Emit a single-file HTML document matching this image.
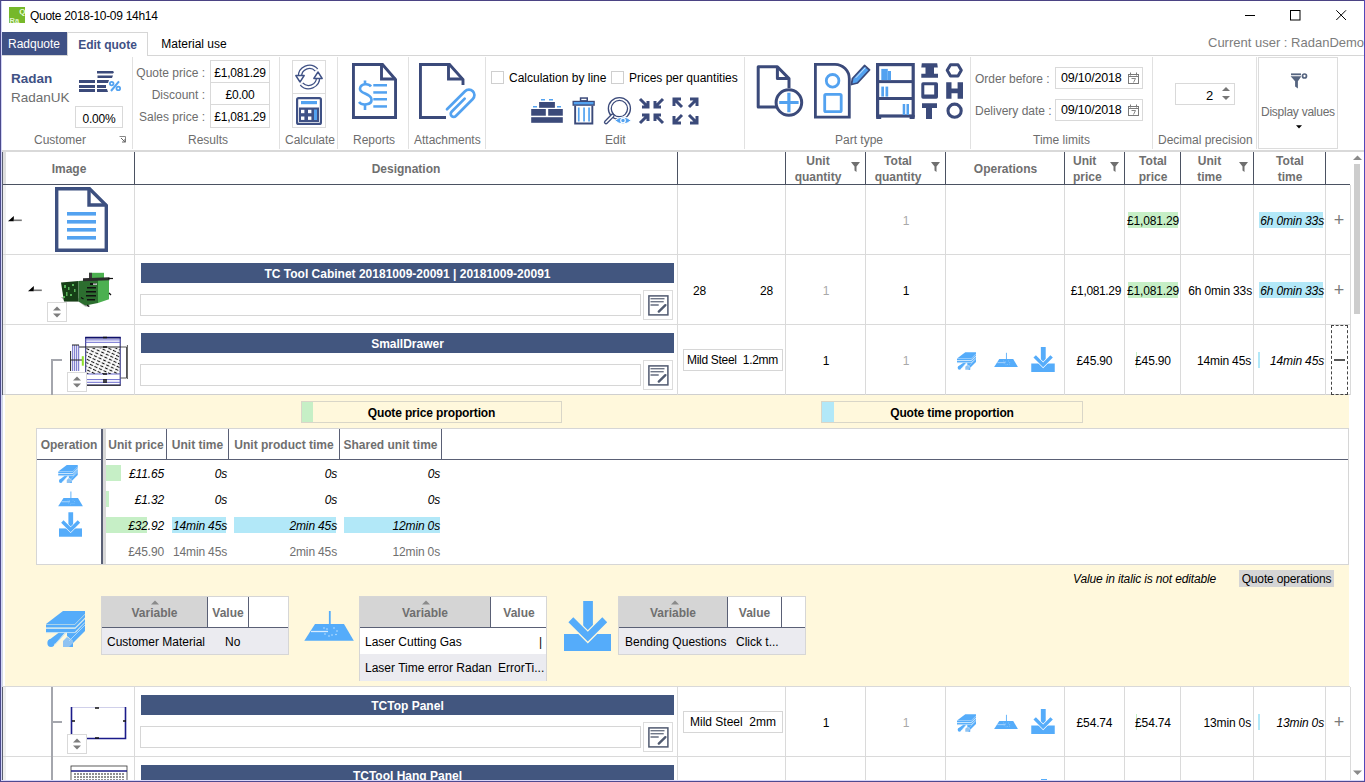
<!DOCTYPE html>
<html><head><meta charset="utf-8">
<style>
*{box-sizing:border-box;margin:0;padding:0}
html,body{width:1365px;height:782px;overflow:hidden;background:#fff}
body{position:relative;font-family:"Liberation Sans",sans-serif;font-size:12px;color:#000}
.a{position:absolute;white-space:nowrap}
.g{color:#6d6d6d}
.sep{position:absolute;width:1px;background:#e1e1e1;top:57px;height:92px}
.vb{position:absolute;border:1px solid #d9d9d9;background:#fff;text-align:center;line-height:24px;letter-spacing:-0.2px}
.lbl{position:absolute;color:#6d6d6d;font-size:12px;white-space:nowrap}
svg{position:absolute;overflow:visible}
.hl{position:absolute;top:152px;width:1px;height:33px;background:#4b5262}
.hd{position:absolute;font-weight:bold;color:#6f6f6f;text-align:center;white-space:nowrap}
.rl{position:absolute;left:3px;width:1347px;height:1px;background:#dadada}
.vl{position:absolute;width:1px;background:#dadada}
.t{position:absolute;white-space:nowrap;line-height:14px;letter-spacing:-0.15px}
.g2{color:#a8a8a8}
.it{font-style:italic;text-align:right}
.tot{color:#6f6f6f;text-align:right}
.vt{position:absolute;border:1px solid #d6d6d6;background:#fff}
.vh{position:absolute;top:0;height:30px;font-weight:bold;color:#6f6f6f;text-align:center;line-height:33px}
.vhl{position:absolute;left:0;right:0;top:30px;height:1px;background:#5a6075}
.vr{position:absolute;left:0;right:0;height:26px}
.vr span{position:absolute;top:7px;line-height:14px;white-space:nowrap}

.pm{text-align:center;font-size:18px;color:#7a7a7a;margin-top:2px;margin-left:1px}
.bar{position:absolute;left:141px;width:533px;height:20px;background:#42567f;color:#fff;font-weight:bold;text-align:center;line-height:22px}
.inp{position:absolute;left:140px;width:501px;height:22px;border:1px solid #d6d6d6;background:#fff}
.ebtn{position:absolute;left:643px;width:30px;height:30px;border:1px solid #dcdcdc;background:#fff}
.spin{position:absolute;width:20px;height:20px;border:1px solid #d9d9d9;background:#fff}
.tb{position:absolute;border:1px solid #d6d6d6;background:#fff;line-height:20px;white-space:nowrap}

</style></head><body>
<svg width="0" height="0" style="position:absolute;left:0;top:0">
<defs>
<symbol id="imat" viewBox="0 0 39 36">
<path d="M0 13L17 0H39V3L29 13Z" fill="#55acfa"/>
<path d="M0 13.6H29L39 3.6V6.6L29 16.6H0Z" fill="#55acfa"/>
<path d="M0 18H29L39 8V11L29 21H0Z" fill="#55acfa"/>
<path d="M3 29L13 21.5H19L9 33Z" fill="#55acfa"/>
<ellipse cx="5" cy="32" rx="3.6" ry="4" fill="#55acfa"/>
<path d="M21 26L17 30V36H27V30Z" fill="#8fc3f2"/>
<path d="M23 36L39 20V11L30 21.5H21V25L27 30V36Z" fill="#55acfa"/>
<path d="M0 17.3H29L39 7.3M0 21.6H29L39 11.6M9 33.5L19.5 22M23 30L39 14" stroke="#b5dcfb" stroke-width="0.9" fill="none"/>
</symbol>
<symbol id="ilas" viewBox="0 0 50 30">
<path d="M0.3 29.7L11 13H40L49.8 29.7Z" fill="#55acfa"/>
<rect x="24.9" y="0" width="1.8" height="21" fill="#55acfa"/>
<path d="M7 20.5H24" stroke="#d6ecff" stroke-width="1.3"/>
<g fill="#d6ecff"><circle cx="20" cy="17" r="0.7"/><circle cx="30" cy="17" r="0.7"/><circle cx="33" cy="20" r="0.7"/><circle cx="21" cy="23" r="0.7"/><circle cx="28" cy="24" r="0.7"/><circle cx="32" cy="23.5" r="0.7"/><circle cx="25" cy="25" r="0.7"/><circle cx="23" cy="18" r="0.7"/></g>
</symbol>
<symbol id="iben" viewBox="0 0 47 50">
<path d="M0 33H47V50H0Z" fill="#55acfa"/>
<rect x="19.2" y="0" width="9.7" height="30" fill="#55acfa" stroke="#fffaf0" stroke-width="0"/>
<path d="M9.3 16.3L23.8 30.8L38.3 16.3L43.2 21.2L23.8 40.6L4.4 21.2Z" fill="#55acfa" stroke="#fff8dc" stroke-width="2.6" paint-order="stroke"/>
</symbol>
<symbol id="ibenw" viewBox="0 0 47 50">
<path d="M0 33H47V50H0Z" fill="#55acfa"/>
<rect x="19.2" y="0" width="9.7" height="30" fill="#55acfa"/>
<path d="M9.3 16.3L23.8 30.8L38.3 16.3L43.2 21.2L23.8 40.6L4.4 21.2Z" fill="#55acfa" stroke="#fff" stroke-width="2.6" paint-order="stroke"/>
</symbol>
<symbol id="iedit" viewBox="0 0 21 21">
<rect x="0.9" y="0.9" width="19" height="19" fill="#fff" stroke="#505a70" stroke-width="1.5"/>
<g fill="#6f7788"><rect x="2.5" y="3" width="14" height="1.4"/><rect x="2.5" y="6" width="13.2" height="1.4"/><rect x="2.5" y="9.2" width="8.2" height="1.6"/></g>
<path d="M10.8 16.6L17.4 10.2" stroke="#505a70" stroke-width="2.4" stroke-linecap="round"/>
</symbol>
<symbol id="ispin" viewBox="0 0 20 20">
<path d="M6 8.5L10 4.5L14 8.5Z M6 11.5L10 15.5L14 11.5Z" fill="#7c7c7c"/>
</symbol>
</defs></svg>
<!-- window border -->
<div class="a" style="left:0;top:0;width:1365px;height:1px;background:#4b4384;z-index:50"></div>
<div class="a" style="left:0;top:0;width:1px;height:782px;background:#4b4a8c;z-index:50"></div>
<div class="a" style="left:1px;top:1px;width:1px;height:780px;background:#d2d4f6;z-index:50"></div>
<div class="a" style="left:1364px;top:0;width:1px;height:782px;background:#5346b8;z-index:50"></div>
<div class="a" style="left:0;top:781px;width:1365px;height:1px;background:#4f4a90;z-index:50"></div>
<div class="a" style="left:1px;top:780px;width:1363px;height:1px;background:#d8d6f8;z-index:50"></div>

<!-- title bar -->
<svg style="left:9px;top:7px" width="16" height="16" viewBox="0 0 16 16">
<rect width="16" height="16" fill="#76b82a"/>
<text x="10.2" y="7.2" font-size="8" font-weight="bold" fill="#e8ffd8" font-family="Liberation Sans">Q</text>
<text x="0.5" y="15.5" font-size="7.5" font-weight="bold" fill="#e0f5d0" font-family="Liberation Sans">Ra</text>
</svg>
<div class="a" style="left:30px;top:9px;font-size:12px;letter-spacing:-0.3px">Quote 2018-10-09 14h14</div>
<svg style="left:1245px;top:15px" width="11" height="2"><rect width="10" height="1" fill="#000"/></svg>
<svg style="left:1290px;top:10px" width="11" height="11"><rect x="0.5" y="0.5" width="9.5" height="9.5" fill="none" stroke="#000"/></svg>
<svg style="left:1336px;top:10px" width="11" height="11"><path d="M0.3 0.3L10 10M10 0.3L0.3 10" stroke="#000" stroke-width="1"/></svg>

<!-- tabs -->
<div class="a" style="left:1px;top:32px;width:66px;height:23px;background:#3f5185;color:#fff;text-align:center;line-height:25px">Radquote</div>
<div class="a" style="left:67px;top:32px;width:81px;height:24px;background:#fff;border:1px solid #d6d6d6;border-bottom:none;color:#3f5185;font-weight:bold;text-align:center;line-height:25px;z-index:2">Edit quote</div>
<div class="a" style="left:148px;top:32px;width:92px;height:23px;text-align:center;line-height:25px">Material use</div>
<div class="a g" style="left:1208px;top:35px;font-size:13px;color:#7c7c7c">Current user : RadanDemo</div>
<div class="a" style="left:1px;top:55px;width:1363px;height:1px;background:#d6d6d6"></div>

<!-- ribbon bottom -->
<div class="a" style="left:1px;top:150px;width:1363px;height:2px;background:#d9d9d9"></div>

<!-- ribbon separators -->
<div class="sep" style="left:132px"></div>
<div class="sep" style="left:279px"></div>
<div class="sep" style="left:337px"></div>
<div class="sep" style="left:408px"></div>
<div class="sep" style="left:485px"></div>
<div class="sep" style="left:744px"></div>
<div class="sep" style="left:970px"></div>
<div class="sep" style="left:1152px"></div>
<div class="sep" style="left:1256px"></div>

<!-- Customer group -->
<div class="a" style="left:11px;top:71px;font-size:13.5px;font-weight:bold;color:#3f5185">Radan</div>
<div class="a g" style="left:11px;top:90px;font-size:13.5px">RadanUK</div>
<svg style="left:79px;top:71px" width="44" height="22" viewBox="0 0 44 22">
<g fill="#3b4a7a">
<rect x="0" y="9" width="16" height="3"/><rect x="0" y="14" width="16" height="3"/><rect x="0" y="18" width="16" height="3"/>
<path d="M18 0h16l1 1.3-1 1.3h-16z"/><path d="M18.5 4.5h15.5l-1 2.6h-14.5z"/><path d="M18 9h12l-1 3h-11z"/><path d="M18 14h9v3h-9z"/><path d="M18 18h10l1 3h-11z"/>
</g>
<g fill="none" stroke="#53a2f0"><circle cx="32.7" cy="12.6" r="1.8" stroke-width="1.8"/><circle cx="39.3" cy="17.4" r="1.8" stroke-width="1.8"/><path d="M40 10.3L32 20" stroke-width="2"/></g>
</svg>
<div class="vb" style="left:75px;top:106px;width:48px;height:22px">0.00%</div>
<div class="lbl" style="left:34px;top:133px">Customer</div>
<svg style="left:119px;top:136px" width="8" height="8"><path d="M0.5 0.5h6v6" fill="none" stroke="#888" stroke-width="1"/><path d="M2 2l4 4M3 6h3v-3" fill="none" stroke="#666"/></svg>

<!-- Results group -->
<div class="lbl" style="left:136px;top:66px;width:69px;text-align:right">Quote price :</div>
<div class="lbl" style="left:136px;top:88px;width:69px;text-align:right">Discount :</div>
<div class="lbl" style="left:136px;top:110px;width:69px;text-align:right">Sales price :</div>
<div class="vb" style="left:210px;top:60px;width:60px;height:23px">£1,081.29</div>
<div class="vb" style="left:210px;top:82px;width:60px;height:23px">£0.00</div>
<div class="vb" style="left:210px;top:104px;width:60px;height:24px">£1,081.29</div>
<div class="lbl" style="left:188px;top:133px">Results</div>

<!-- Calculate group -->
<div class="a" style="left:292px;top:60px;width:34px;height:34px;border:1px solid #dcdcdc"></div>
<div class="a" style="left:292px;top:93px;width:34px;height:35px;border:1px solid #dcdcdc"></div>
<svg style="left:295px;top:65px" width="28" height="24" viewBox="0 0 28 24">
<g fill="none" stroke-linecap="butt">
<path d="M5 12A9.5 9.5 0 0 1 21.5 5" stroke="#3f5185" stroke-width="4.6"/>
<path d="M5 12A9.5 9.5 0 0 1 21.5 5" stroke="#fff" stroke-width="2"/>
<path d="M23 12A9.5 9.5 0 0 1 6.5 19" stroke="#3f5185" stroke-width="4.6"/>
<path d="M23 12A9.5 9.5 0 0 1 6.5 19" stroke="#fff" stroke-width="2"/>
</g>
<path d="M0.8 10.5L9.2 10.5L5 17Z" fill="#fff" stroke="#3f5185" stroke-width="1.4" stroke-linejoin="round"/>
<path d="M18.8 13.5L27.2 13.5L23 7Z" fill="#fff" stroke="#3f5185" stroke-width="1.4" stroke-linejoin="round"/>
</svg>
<svg style="left:296px;top:97px" width="26" height="28" viewBox="0 0 26 28">
<rect x="1.1" y="1.1" width="23.8" height="25.8" rx="1.5" fill="#fff" stroke="#3f5185" stroke-width="2.2"/>
<rect x="5" y="4" width="16" height="3.2" fill="#53a2f0"/>
<rect x="3" y="10.5" width="20" height="14.5" fill="#3f5185"/>
<g fill="#fff"><rect x="5" y="12.8" width="3.4" height="3.4"/><rect x="12" y="12.8" width="3.4" height="3.4"/><rect x="5" y="19.5" width="3.4" height="3.4"/><rect x="12" y="19.5" width="3.4" height="3.4"/></g>
<rect x="18" y="12.5" width="3" height="10.5" fill="#53a2f0"/>
</svg>
<div class="lbl" style="left:285px;top:133px">Calculate</div>

<!-- Reports -->
<svg style="left:352px;top:63px" width="46" height="56" viewBox="0 0 46 56">
<path d="M1.45 1.45H30.5L43.55 16.5V54.55H1.45Z" fill="none" stroke="#3b4a7a" stroke-width="2.9"/>
<path d="M29.5 1.45V16H43.55" fill="none" stroke="#3b4a7a" stroke-width="2.9"/>
<path d="M19 23.5C17 20.5 9 20 8 25.5C7 31 19 30 19.5 36.5C20 42 10 43 7 39" fill="none" stroke="#53a2f0" stroke-width="2.6"/>
<path d="M13 17.5V22M13 42V47" stroke="#53a2f0" stroke-width="2.6"/>
<g fill="#53a2f0"><rect x="21.3" y="21" width="13.7" height="2.5"/><rect x="21.3" y="28.2" width="13.7" height="2.5"/><rect x="21.3" y="35" width="13.7" height="2.5"/><rect x="21.3" y="42.2" width="13.7" height="2.5"/></g>
</svg>
<div class="lbl" style="left:353px;top:133px">Reports</div>

<!-- Attachments -->
<svg style="left:419px;top:63px" width="60" height="60" viewBox="0 0 60 60">
<path d="M27 54.55H1.45V1.45H30.5L44 16.5V22" fill="none" stroke="#3b4a7a" stroke-width="2.9"/>
<path d="M29.5 1.45V16H44" fill="none" stroke="#3b4a7a" stroke-width="2.9"/>
<g transform="translate(42.5 39.5) rotate(45)">
<path d="M-5.5 15V-10.5A5.5 5.5 0 0 1 5.5 -10.5V13.5A3 3 0 0 1 -0.5 13.5V-5" fill="none" stroke="#53a2f0" stroke-width="2.7" stroke-linecap="round"/>
</g>
</svg>
<div class="lbl" style="left:414px;top:133px">Attachments</div>

<!-- Edit group -->
<div class="a" style="left:491px;top:71px;width:13px;height:13px;border:1px solid #cfcfcf;background:#fff"></div>
<div class="a" style="left:509px;top:71px">Calculation by line</div>
<div class="a" style="left:611px;top:71px;width:13px;height:13px;border:1px solid #cfcfcf;background:#fff"></div>
<div class="a" style="left:629px;top:71px">Prices per quantities</div>
<svg style="left:531px;top:98px" width="33" height="26" viewBox="0 0 33 26">
<g fill="#53a2f0"><rect x="10" y="1" width="4" height="1.5"/><rect x="18" y="1" width="4" height="1.5"/><rect x="2" y="8" width="4" height="1.5"/><rect x="26" y="8" width="4" height="1.5"/></g>
<g fill="#3b4a7a"><rect x="8.1" y="4" width="15.8" height="5.8"/><rect x="0.2" y="11" width="14.6" height="6.7"/><rect x="17.2" y="11" width="14.6" height="6.7"/><rect x="0.2" y="19.2" width="31.6" height="5.6"/></g>
</svg>
<svg style="left:572px;top:97px" width="24" height="28" viewBox="0 0 24 28">
<rect x="8.55" y="1.05" width="6.7" height="2.8" fill="none" stroke="#3b4a7a" stroke-width="1.5"/>
<rect x="0.5" y="3.8" width="22.3" height="5" fill="#3b4a7a"/>
<rect x="1.8" y="5" width="19.7" height="2.4" fill="#53a2f0"/>
<path d="M3.15 8.8V26.55H20.35V8.8" fill="none" stroke="#3b4a7a" stroke-width="1.9"/>
<g fill="#53a2f0"><rect x="5.9" y="10.5" width="1.7" height="14"/><rect x="11.2" y="10.5" width="1.7" height="14"/><rect x="16.2" y="10.5" width="1.7" height="14"/></g>
</svg>
<svg style="left:603px;top:96px" width="29" height="30" viewBox="0 0 29 30">
<circle cx="16.4" cy="12.6" r="9.6" fill="none" stroke="#3b4a7a" stroke-width="4.2"/>
<circle cx="16.4" cy="12.6" r="9.6" fill="none" stroke="#fff" stroke-width="1.6"/>
<path d="M9.6 19.6L3 26.2" stroke="#3b4a7a" stroke-width="4.2" stroke-linecap="round"/>
<path d="M9.6 19.6L3 26.2" stroke="#fff" stroke-width="1.6" stroke-linecap="round"/>
<path d="M11.8 24.5Q20 17.5 28.2 24.5Q20 31.5 11.8 24.5Z" fill="#53a2f0" stroke="#fff" stroke-width="1"/>
<circle cx="20" cy="24.5" r="2.3" fill="none" stroke="#fff" stroke-width="1.1"/>
</svg>
<svg style="left:639px;top:98px" width="25" height="26" viewBox="0 0 25 26">
<g fill="none" stroke="#3b4a7a" stroke-width="3">
<path d="M1 1L9 9M3 9h6V3"/><path d="M24 1L16 9M22 9h-6V3"/>
<path d="M1 25L9 17M3 17h6v6"/><path d="M24 25L16 17M22 17h-6v6"/>
</g></svg>
<svg style="left:673px;top:98px" width="25" height="26" viewBox="0 0 25 26">
<g fill="none" stroke="#3b4a7a" stroke-width="3">
<path d="M9 9L2 2M1 8V1h7"/><path d="M16 9L23 2M24 8V1h-7"/>
<path d="M9 17L2 24M1 18v7h7"/><path d="M16 17L23 24M24 18v7h-7"/>
</g></svg>
<div class="lbl" style="left:605px;top:133px">Edit</div>

<!-- Part type -->
<svg style="left:756px;top:64px" width="50" height="56" viewBox="0 0 50 56">
<path d="M21 42.9H2.2V2.7H21.4L33 14.6V24" fill="none" stroke="#3b4a7a" stroke-width="3" stroke-linejoin="round"/>
<path d="M21.4 2.7V14.6H33" fill="none" stroke="#3b4a7a" stroke-width="3" stroke-linejoin="round"/>
<circle cx="32.9" cy="38.5" r="12.8" fill="#fff" stroke="#3b4a7a" stroke-width="3"/>
<path d="M32.9 28.8V48.2M23.2 38.5H42.6" stroke="#53a2f0" stroke-width="3.2"/>
</svg>
<svg style="left:814px;top:63px" width="57" height="57" viewBox="0 0 57 57">
<path d="M1.4 54.2V1.4H21A14.3 14.3 0 0 1 35.3 15.7V54.2Z" fill="none" stroke="#3b4a7a" stroke-width="2.8"/>
<circle cx="18.6" cy="17.8" r="6.3" fill="none" stroke="#53a2f0" stroke-width="2.8"/>
<rect x="10.7" y="31.4" width="16.5" height="17.2" rx="1.2" fill="none" stroke="#53a2f0" stroke-width="2.8"/>
<path d="M38.5 15.5L50.5 2.5L55.5 7L43.5 20L37.5 21.5Z" fill="#53a2f0" stroke="#3b4a7a" stroke-width="1.8" stroke-linejoin="round"/>
<path d="M41.8 14.8L51.5 4.6" stroke="#d8ecfc" stroke-width="1"/>
</svg>
<svg style="left:876px;top:63px" width="39" height="57" viewBox="0 0 39 57">
<rect x="1.6" y="1.6" width="35.6" height="51.4" fill="none" stroke="#3b4a7a" stroke-width="3.2"/>
<rect x="1" y="17.1" width="37" height="3" fill="#3b4a7a"/><rect x="1" y="34" width="37" height="3" fill="#3b4a7a"/>
<rect x="0.2" y="52" width="5" height="4" fill="#3b4a7a"/><rect x="33.6" y="52" width="5" height="4" fill="#3b4a7a"/>
<g fill="#53a2f0"><rect x="5.3" y="5.9" width="6.5" height="11.2"/><rect x="12" y="8" width="3" height="9.1"/><rect x="5.3" y="23.6" width="2.7" height="10"/><rect x="9.5" y="23.6" width="2.7" height="10"/><rect x="26.7" y="41" width="2.5" height="11"/><rect x="30.5" y="41" width="2.5" height="11"/></g>
</svg>
<svg style="left:921px;top:63px" width="44" height="57" viewBox="0 0 44 57">
<g fill="#3b4a7a">
<path d="M0.8 0.2H16.2L16.8 4.5H13V10.8H17V14.8H0.3V10.8H4.5V4.5H0.3Z"/>
<path d="M2 19.2H15.3A1.7 1.7 0 0 1 17 20.9V34A1.7 1.7 0 0 1 15.3 35.7H2A1.7 1.7 0 0 1 0.3 34V20.9A1.7 1.7 0 0 1 2 19.2ZM3.3 22.2V31.6H13.2V22.2Z" fill-rule="evenodd"/>
<path d="M1 40.2H16V45H11V56H5V45H1Z"/>
<path d="M25.2 19.2H30.5V25.6H36.6V19.2H42V35.7H36.6V30.2H30.5V35.7H25.2Z"/>
</g>
<path d="M26.2 7.3L29.5 1.7H37L40.3 7.3L37 13.1H29.5Z" fill="none" stroke="#3b4a7a" stroke-width="3" stroke-linejoin="round"/>
<circle cx="33.6" cy="47.7" r="6.6" fill="none" stroke="#3b4a7a" stroke-width="3.1"/>
</svg>
<div class="lbl" style="left:835px;top:133px">Part type</div>

<!-- Time limits -->
<div class="lbl" style="left:975px;top:72px">Order before :</div>
<div class="lbl" style="left:975px;top:104px">Delivery date :</div>
<div class="vb" style="left:1055px;top:67px;width:88px;height:22px;text-align:left;padding-left:5px;font-size:12.5px;line-height:21px">09/10/2018</div>
<div class="vb" style="left:1055px;top:99px;width:88px;height:22px;text-align:left;padding-left:5px;font-size:12.5px;line-height:21px">09/10/2018</div>
<svg style="left:1128px;top:72px" width="11" height="12"><rect x="0.5" y="2.5" width="10" height="9" fill="none" stroke="#7a7a7a"/><path d="M2.5 0.5v3M8.5 0.5v3M0.5 4.5h10" fill="none" stroke="#7a7a7a"/><path d="M3.5 6.5h4l-2 4" fill="none" stroke="#7a7a7a" stroke-width="0.9"/></svg>
<svg style="left:1128px;top:104px" width="11" height="12"><rect x="0.5" y="2.5" width="10" height="9" fill="none" stroke="#7a7a7a"/><path d="M2.5 0.5v3M8.5 0.5v3M0.5 4.5h10" fill="none" stroke="#7a7a7a"/><path d="M3.5 6.5h4l-2 4" fill="none" stroke="#7a7a7a" stroke-width="0.9"/></svg>
<div class="lbl" style="left:1033px;top:133px">Time limits</div>

<!-- Decimal precision -->
<div class="vb" style="left:1175px;top:83px;width:60px;height:22px"></div>
<div class="a" style="left:1206px;top:88px;font-size:13px">2</div>
<svg style="left:1222px;top:86px" width="8" height="15"><path d="M0 5L4 1L8 5Z M0 10L4 14L8 10Z" fill="#777"/></svg>
<div class="lbl" style="left:1158px;top:133px">Decimal precision</div>

<!-- Display values -->
<div class="a" style="left:1258px;top:57px;width:80px;height:92px;border:1px solid #dcdcdc"></div>
<svg style="left:1290px;top:72px" width="18" height="18" viewBox="0 0 18 18">
<path d="M1 1.4H11V3.2H1Z" fill="#55647f"/>
<path d="M0.6 4.3H11.4L7.9 9.2V16.5L5.1 14.6V9.2Z" fill="#55647f"/>
<circle cx="14.5" cy="4" r="2" fill="none" stroke="#55647f" stroke-width="1.7"/>
</svg>
<div class="lbl" style="left:1261px;top:105px;letter-spacing:-0.25px">Display values</div>
<svg style="left:1296px;top:125px" width="7" height="4"><path d="M0 0.2h6L3 3.6z" fill="#000"/></svg>


<!-- ================= GRID ================= -->
<div class="a" style="left:2px;top:152px;width:1px;height:243px;background:#5b6070"></div>
<div class="a" style="left:2px;top:395px;width:1px;height:292px;background:#d0d8e0"></div>
<div class="a" style="left:2px;top:687px;width:1px;height:94px;background:#5b6070"></div>
<div class="a" style="left:3px;top:152px;width:3px;height:33px;background:#dedede"></div>
<div class="a" style="left:3px;top:185px;width:3px;height:596px;background:#efefef"></div>
<!-- header -->
<div class="a" style="left:3px;top:184px;width:1347px;height:1px;background:#4b5262"></div>
<div class="hl" style="left:134px"></div><div class="hl" style="left:677px"></div><div class="hl" style="left:785px"></div>
<div class="hl" style="left:865px"></div><div class="hl" style="left:945px"></div><div class="hl" style="left:1064px"></div>
<div class="hl" style="left:1124px"></div><div class="hl" style="left:1180px"></div><div class="hl" style="left:1253px"></div>
<div class="hl" style="left:1325px"></div><div class="hl" style="left:1350px"></div>
<div class="hd" style="left:4px;width:130px;top:162px">Image</div>
<div class="hd" style="left:134px;width:544px;top:162px">Designation</div>
<div class="hd" style="left:786px;width:64px;top:153px;line-height:16px">Unit<br>quantity</div>
<div class="hd" style="left:866px;width:64px;top:153px;line-height:16px">Total<br>quantity</div>
<div class="hd" style="left:946px;width:119px;top:162px">Operations</div>
<div class="hd" style="left:1065px;width:44px;top:153px;line-height:16px;text-align:left;padding-left:8px">Unit<br>price</div>
<div class="hd" style="left:1125px;width:56px;top:153px;line-height:16px">Total<br>price</div>
<div class="hd" style="left:1181px;width:57px;top:153px;line-height:16px">Unit<br>time</div>
<div class="hd" style="left:1254px;width:72px;top:153px;line-height:16px">Total<br>time</div>
<svg style="left:851px;top:162px" width="9" height="10"><path d="M0 0h9L5.5 4.5V10L3.5 8.5V4.5Z" fill="#6f6f6f"/></svg>
<svg style="left:931px;top:162px" width="9" height="10"><path d="M0 0h9L5.5 4.5V10L3.5 8.5V4.5Z" fill="#6f6f6f"/></svg>
<svg style="left:1110px;top:162px" width="9" height="10"><path d="M0 0h9L5.5 4.5V10L3.5 8.5V4.5Z" fill="#6f6f6f"/></svg>
<svg style="left:1239px;top:162px" width="9" height="10"><path d="M0 0h9L5.5 4.5V10L3.5 8.5V4.5Z" fill="#6f6f6f"/></svg>

<!-- row grid lines -->
<div class="rl" style="top:254px"></div>
<div class="rl" style="top:324px"></div>
<div class="rl" style="top:394px;height:1px;background:#cfcfcf"></div>
<div class="rl" style="top:756px"></div>
<div class="vl" style="left:134px;top:185px;height:210px"></div><div class="vl" style="left:677px;top:185px;height:210px"></div>
<div class="vl" style="left:785px;top:185px;height:210px"></div><div class="vl" style="left:865px;top:185px;height:210px"></div>
<div class="vl" style="left:945px;top:185px;height:210px"></div><div class="vl" style="left:1064px;top:185px;height:210px"></div>
<div class="vl" style="left:1124px;top:185px;height:210px"></div><div class="vl" style="left:1180px;top:185px;height:210px"></div>
<div class="vl" style="left:1253px;top:185px;height:210px"></div><div class="vl" style="left:1325px;top:185px;height:210px"></div>
<div class="vl" style="left:134px;top:687px;height:95px"></div><div class="vl" style="left:677px;top:687px;height:95px"></div>
<div class="vl" style="left:785px;top:687px;height:95px"></div><div class="vl" style="left:865px;top:687px;height:95px"></div>
<div class="vl" style="left:945px;top:687px;height:95px"></div><div class="vl" style="left:1064px;top:687px;height:95px"></div>
<div class="vl" style="left:1124px;top:687px;height:95px"></div><div class="vl" style="left:1180px;top:687px;height:95px"></div>
<div class="vl" style="left:1253px;top:687px;height:95px"></div><div class="vl" style="left:1325px;top:687px;height:95px"></div>

<!-- scrollbar -->
<div class="a" style="left:1350px;top:152px;width:14px;height:629px;background:#fff"></div>
<div class="a" style="left:1350px;top:185px;width:1px;height:210px;background:#dadada"></div><div class="a" style="left:1350px;top:687px;width:1px;height:94px;background:#dadada"></div>
<svg style="left:1353px;top:155px" width="9" height="6"><path d="M0 5L4.5 0.5L9 5Z" fill="#8a8a8a"/></svg>
<div class="a" style="left:1354px;top:164px;width:6px;height:150px;background:#cdcdcd"></div>
<svg style="left:1353px;top:770px" width="9" height="6"><path d="M0 0.5H9L4.5 5Z" fill="#8a8a8a"/></svg>

<!-- ROW 1 -->
<svg style="left:8px;top:216px" width="14" height="6"><path d="M0 5.2L5.8 0V5.2Z" fill="#000"/><rect x="5.8" y="3.5" width="8" height="1.6" fill="#777"/></svg>
<svg style="left:55px;top:187px" width="53" height="65" viewBox="0 0 53 65">
<path d="M1.7 1.7H34.5L51.3 18.5V63.3H1.7Z" fill="#fff" stroke="#3d5080" stroke-width="3.4"/>
<path d="M34 1.7V18H51.3" fill="none" stroke="#3d5080" stroke-width="3.4"/>
<g fill="#53a2f0"><rect x="12" y="25" width="29" height="3.6"/><rect x="12" y="33" width="29" height="3.6"/><rect x="12" y="41" width="29" height="3.6"/><rect x="12" y="49" width="29" height="3.6"/></g>
</svg>
<div class="t g2" style="left:866px;width:80px;top:214px;text-align:center">1</div>
<div class="a" style="left:1128px;top:212px;width:50px;height:16px;background:#c6efc6"></div>
<div class="t" style="left:1125px;width:56px;top:214px;text-align:center">£1,081.29</div>
<div class="a" style="left:1259px;top:212px;width:64px;height:16px;background:#b2e8f8"></div>
<div class="t" style="left:1254px;width:70px;top:214px;text-align:right;font-style:italic">6h 0min 33s</div>
<div class="t pm" style="left:1326px;width:24px;top:211px">+</div>

<!-- ROW 2 -->
<svg style="left:28px;top:286px" width="14" height="6"><path d="M0 5.2L5.8 0V5.2Z" fill="#000"/><rect x="5.8" y="3.5" width="8" height="1.6" fill="#777"/></svg>
<svg style="left:60px;top:272px" width="54" height="36" viewBox="0 0 54 36">
<path d="M1 25L5 29.5H18.5L25 34.5L30 35L27 28L12 25Z" fill="#b5b5b5"/>
<rect x="29" y="0.8" width="15" height="6.2" fill="#4cb050"/><rect x="29" y="0.8" width="3" height="6.2" fill="#3a3a3a"/>
<path d="M1 10.4L18.5 9V29.5H4Z" fill="#163f16"/>
<path d="M18.5 9L38 7.5V31L25.5 33.5L18.5 29.5Z" fill="#2c6e2f"/>
<path d="M38 7.5L49 6V27.3L38 31Z" fill="#4cb050"/>
<path d="M23 6.2L49.5 5.2V8.2L23 9.2Z" fill="#2b2b2b"/>
<path d="M48 6.5H53" stroke="#111" stroke-width="1.2"/>
<g fill="#5fc060" opacity="0.9"><rect x="4" y="13" width="2" height="3"/><rect x="8" y="15" width="1.5" height="3"/><rect x="12" y="12" width="2" height="2"/><rect x="6" y="20" width="1.5" height="4"/><rect x="10" y="22" width="2" height="2"/><rect x="14" y="17" width="1.5" height="3"/><rect x="3" y="24" width="2" height="2"/></g>
<g fill="#111"><rect x="27" y="15" width="9" height="1.5"/><rect x="26" y="19" width="10" height="1.5"/><rect x="26" y="23" width="10" height="1.5"/><rect x="27" y="27" width="8" height="1.5"/><rect x="30" y="11" width="6" height="2"/></g>
<rect x="33" y="11.5" width="4" height="1.3" fill="#ddd"/>
<path d="M21 25.5l2.5 1.5M49 21l2 2M27 33l2 1.5" stroke="#111" stroke-width="1.3"/>
</svg>
<div class="spin" style="left:47px;top:302px"></div><svg style="left:47px;top:302px" width="20" height="20"><use href="#ispin"/></svg>
<div class="bar" style="top:263px">TC Tool Cabinet 20181009-20091 | 20181009-20091</div>
<div class="inp" style="top:294px"></div>
<div class="ebtn" style="top:290px"></div><svg style="left:648px;top:295px" width="21" height="21"><use href="#iedit"/></svg>
<div class="t" style="left:693px;top:284px">28</div>
<div class="t" style="left:760px;top:284px">28</div>
<div class="t g2" style="left:786px;width:80px;top:284px;text-align:center">1</div>
<div class="t" style="left:866px;width:80px;top:284px;text-align:center">1</div>
<div class="t" style="left:1065px;width:56px;top:284px;text-align:right;letter-spacing:-0.35px">£1,081.29</div>
<div class="a" style="left:1128px;top:282px;width:50px;height:16px;background:#c6efc6"></div>
<div class="t" style="left:1125px;width:56px;top:284px;text-align:center">£1,081.29</div>
<div class="t" style="left:1181px;width:71px;top:284px;text-align:right">6h 0min 33s</div>
<div class="a" style="left:1259px;top:282px;width:64px;height:16px;background:#b2e8f8"></div>
<div class="t" style="left:1254px;width:70px;top:284px;text-align:right;font-style:italic">6h 0min 33s</div>
<div class="t pm" style="left:1326px;width:24px;top:281px">+</div>

<!-- ROW 3 -->
<div class="a" style="left:51px;top:359px;width:2px;height:36px;background:#a4a6ad"></div>
<div class="a" style="left:51px;top:359px;width:11px;height:2px;background:#a4a6ad"></div>
<svg style="left:70px;top:336px" width="60" height="52" viewBox="0 0 60 52">
<defs><pattern id="hatch" width="5" height="3.2" patternUnits="userSpaceOnUse" patternTransform="rotate(25)"><path d="M0 1.2H3.3" stroke="#111" stroke-width="1.1"/></pattern></defs>
<rect x="15.7" y="1.6" width="34.5" height="47.4" fill="#fff" stroke="#23237a" stroke-width="1"/>
<path d="M15.2 1.7H50.7" stroke="#10106a" stroke-width="1.8"/>
<path d="M15.2 3.9H50.7M15.2 6.3H50.7M15.2 38H50.7M15.2 43.6H50.7M15.2 46.3H50.7" stroke="#5a5ac8" stroke-width="0.9"/>
<path d="M9 11H50.7M15.2 49.3H50.7" stroke="#222" stroke-width="1"/>
<rect x="16.3" y="12" width="33.5" height="26" fill="url(#hatch)"/>
<path d="M2.7 9V35M4.7 9V35M6.7 9V35M8.7 9V35" stroke="#5858c0" stroke-width="0.9"/>
<path d="M2 9H9M0.6 15V35M0.6 24H12" stroke="#222" stroke-width="1"/>
<rect x="11.8" y="20.2" width="2" height="9.5" fill="#8ee02a"/>
<path d="M50.7 11H56.5V42H50.7M57.4 9V43" stroke="#444" stroke-width="0.9" fill="none"/>
<path d="M33 1.5h4M33 11h4M33 38h4M33 44h4M33 46h4" stroke="#111" stroke-width="1.3"/>
</svg>
<div class="spin" style="left:67px;top:372px"></div><svg style="left:67px;top:372px" width="20" height="20"><use href="#ispin"/></svg>
<div class="bar" style="top:333px">SmallDrawer</div>
<div class="inp" style="top:364px"></div>
<div class="ebtn" style="top:360px"></div><svg style="left:648px;top:365px" width="21" height="21"><use href="#iedit"/></svg>
<div class="tb" style="left:683px;top:349px;width:100px;height:22px;text-align:left;padding-left:3px;letter-spacing:-0.3px">Mild Steel&nbsp; 1.2mm</div>
<div class="t" style="left:786px;width:80px;top:354px;text-align:center">1</div>
<div class="t g2" style="left:866px;width:80px;top:354px;text-align:center">1</div>
<div class="t" style="left:1065px;width:59px;top:354px;text-align:center">£45.90</div>
<div class="a" style="left:1136px;top:352px;width:1px;height:16px;background:#c6efc6"></div>
<div class="t" style="left:1125px;width:56px;top:354px;text-align:center">£45.90</div>
<div class="t" style="left:1181px;width:70px;top:354px;text-align:right">14min 45s</div>
<div class="a" style="left:1258px;top:352px;width:2px;height:16px;background:#b2e8f8"></div>
<div class="t" style="left:1254px;width:70px;top:354px;text-align:right;font-style:italic">14min 45s</div>
<div class="a" style="left:1331px;top:325px;width:17px;height:70px;border:1px dashed #444"></div>
<div class="a" style="left:1334px;top:359px;width:11px;height:2px;background:#555"></div>
<svg style="left:957px;top:352px" width="19" height="18"><use href="#imat"/></svg>
<svg style="left:994px;top:352px" width="24" height="16"><use href="#ilas"/></svg>
<svg style="left:1031px;top:347px" width="24" height="25"><use href="#ibenw"/></svg>


<!-- ================= DETAIL PANEL ================= -->
<div class="a" style="left:3px;top:395px;width:1346px;height:292px;background:#fff8dc"></div>
<div class="a" style="left:3px;top:395px;width:2px;height:292px;background:#fff"></div>
<div class="a" style="left:3px;top:686px;width:1347px;height:1px;background:#d9d9d9"></div>
<!-- proportion boxes -->
<div class="a" style="left:301px;top:401px;width:261px;height:22px;border:1px solid #d9d6c8;background:#fff8dc"></div>
<div class="a" style="left:302px;top:402px;width:11px;height:20px;background:#c6efc6"></div>
<div class="t" style="left:301px;width:261px;top:406px;text-align:center;font-weight:bold">Quote price proportion</div>
<div class="a" style="left:821px;top:401px;width:262px;height:22px;border:1px solid #d9d6c8;background:#fff8dc"></div>
<div class="a" style="left:822px;top:402px;width:12px;height:20px;background:#b2e8f8"></div>
<div class="t" style="left:821px;width:262px;top:406px;text-align:center;font-weight:bold">Quote time proportion</div>

<!-- inner table -->
<div class="a" style="left:36px;top:428px;width:1313px;height:137px;border:1px solid #d6d6d6;background:#fff"></div>
<div class="a" style="left:37px;top:459px;width:1311px;height:1px;background:#5a6075"></div>
<div class="a" style="left:101px;top:429px;width:2px;height:135px;background:#5a6075"></div>
<div class="a" style="left:103px;top:429px;width:3px;height:135px;background:#d8d8d8"></div>
<div class="a" style="left:166px;top:429px;width:1px;height:30px;background:#5a6075"></div>
<div class="a" style="left:228px;top:429px;width:1px;height:30px;background:#5a6075"></div>
<div class="a" style="left:339px;top:429px;width:1px;height:30px;background:#5a6075"></div>
<div class="a" style="left:441px;top:429px;width:1px;height:30px;background:#5a6075"></div>
<div class="hd" style="left:37px;width:64px;top:438px">Operation</div>
<div class="hd" style="left:106px;width:60px;top:438px">Unit price</div>
<div class="hd" style="left:167px;width:61px;top:438px">Unit time</div>
<div class="hd" style="left:229px;width:110px;top:438px">Unit product time</div>
<div class="hd" style="left:340px;width:101px;top:438px">Shared unit time</div>
<svg style="left:58px;top:465px" width="20" height="18"><use href="#imat"/></svg>
<svg style="left:58px;top:491px" width="25" height="16"><use href="#ilas"/></svg>
<svg style="left:59px;top:512px" width="23" height="25"><use href="#ibenw"/></svg>
<div class="a" style="left:106px;top:465px;width:15px;height:16px;background:#c6efc6"></div>
<div class="a" style="left:106px;top:491px;width:3px;height:16px;background:#c6efc6"></div>
<div class="a" style="left:106px;top:517px;width:41px;height:16px;background:#c6efc6"></div>
<div class="a" style="left:172px;top:517px;width:54px;height:16px;background:#b2e8f8"></div>
<div class="a" style="left:234px;top:517px;width:102px;height:16px;background:#b2e8f8"></div>
<div class="a" style="left:344px;top:517px;width:96px;height:16px;background:#b2e8f8"></div>
<div class="t it" style="left:106px;width:58px;top:467px">£11.65</div>
<div class="t it" style="left:167px;width:60px;top:467px">0s</div>
<div class="t it" style="left:229px;width:108px;top:467px">0s</div>
<div class="t it" style="left:340px;width:100px;top:467px">0s</div>
<div class="t it" style="left:106px;width:58px;top:493px">£1.32</div>
<div class="t it" style="left:167px;width:60px;top:493px">0s</div>
<div class="t it" style="left:229px;width:108px;top:493px">0s</div>
<div class="t it" style="left:340px;width:100px;top:493px">0s</div>
<div class="t it" style="left:106px;width:58px;top:519px">£32.92</div>
<div class="t it" style="left:167px;width:60px;top:519px">14min 45s</div>
<div class="t it" style="left:229px;width:108px;top:519px">2min 45s</div>
<div class="t it" style="left:340px;width:100px;top:519px">12min 0s</div>
<div class="t tot" style="left:106px;width:58px;top:545px">£45.90</div>
<div class="t tot" style="left:167px;width:60px;top:545px">14min 45s</div>
<div class="t tot" style="left:229px;width:108px;top:545px">2min 45s</div>
<div class="t tot" style="left:340px;width:100px;top:545px">12min 0s</div>

<div class="t" style="left:1073px;top:572px;font-style:italic">Value in italic is not editable</div>
<div class="a" style="left:1239px;top:570px;width:95px;height:17px;background:#d5d5d5"></div>
<div class="t" style="left:1239px;width:95px;top:572px;text-align:center">Quote operations</div>

<!-- material op -->
<svg style="left:46px;top:611px" width="39" height="36"><use href="#imat"/></svg>
<div class="vt" style="left:101px;top:596px;width:188px;height:59px">
 <div class="vh" style="left:0;width:105px;background:#d5d5d5">Variable</div>
 <div class="vh" style="left:105px;width:41px;border-left:1px solid #5a6075">Value</div>
 <div class="a" style="left:146px;top:0;width:1px;height:30px;background:#5a6075"></div>
 <div class="vhl"></div>
 <div class="vr" style="top:31px;background:#ebebf0"><span style="left:5px">Customer Material</span><span style="left:123px">No</span></div>
 <svg style="left:49px;top:3px" width="8" height="5"><path d="M0 4.5L4 0.5L8 4.5Z" fill="#8a8a8a"/></svg>
</div>
<!-- laser op -->
<svg style="left:304px;top:611px" width="50" height="30"><use href="#ilas"/></svg>
<div class="vt" style="left:359px;top:596px;width:188px;height:85px">
 <div class="vh" style="left:0;width:130px;background:#d5d5d5">Variable</div>
 <div class="vh" style="left:130px;width:57px;border-left:1px solid #5a6075">Value</div>
 <div class="vhl"></div>
 <div class="vr" style="top:31px;background:#fff"><span style="left:5px">Laser Cutting Gas</span><span style="left:179px">|</span></div>
 <div class="vr" style="top:57px;height:27px;background:#ebebf0"><span style="left:5px">Laser Time error Radan</span><span style="left:138px">ErrorTi...</span></div>
 <svg style="left:62px;top:3px" width="8" height="5"><path d="M0 4.5L4 0.5L8 4.5Z" fill="#8a8a8a"/></svg>
</div>
<!-- bend op -->
<svg style="left:564px;top:601px" width="47" height="50"><use href="#iben"/></svg>
<div class="vt" style="left:618px;top:596px;width:188px;height:59px">
 <div class="vh" style="left:0;width:108px;background:#d5d5d5">Variable</div>
 <div class="vh" style="left:108px;width:54px;border-left:1px solid #5a6075">Value</div>
 <div class="a" style="left:162px;top:0;width:1px;height:30px;background:#5a6075"></div>
 <div class="vhl"></div>
 <div class="vr" style="top:31px;background:#ebebf0"><span style="left:6px">Bending Questions</span><span style="left:117px">Click t...</span></div>
 <svg style="left:52px;top:3px" width="8" height="5"><path d="M0 4.5L4 0.5L8 4.5Z" fill="#8a8a8a"/></svg>
</div>

<!-- ROW 4 -->
<div class="a" style="left:51px;top:687px;width:2px;height:95px;background:#a4a6ad"></div>
<div class="a" style="left:51px;top:721px;width:11px;height:2px;background:#a4a6ad"></div>
<svg style="left:70px;top:705px" width="58" height="36" viewBox="0 0 58 36">
<path d="M1.5 33.5V2.5H55.5V33.5H2" fill="none" stroke="#d0d0ea" stroke-width="1"/>
<path d="M1.5 2V29M55.5 2V33.5H17" fill="none" stroke="#1b1b8a" stroke-width="1.6"/>
<path d="M25 3h4M2 16h3M53 16h3M25 33h4" stroke="#111" stroke-width="1.5"/>
</svg>
<div class="spin" style="left:67px;top:734px"></div><svg style="left:67px;top:734px" width="20" height="20"><use href="#ispin"/></svg>
<div class="bar" style="top:695px">TCTop Panel</div>
<div class="inp" style="top:726px"></div>
<div class="ebtn" style="top:722px"></div><svg style="left:648px;top:727px" width="21" height="21"><use href="#iedit"/></svg>
<div class="tb" style="left:683px;top:711px;width:100px;height:22px;text-align:left;padding-left:6px">Mild Steel&nbsp; 2mm</div>
<div class="t" style="left:786px;width:80px;top:716px;text-align:center">1</div>
<div class="t g2" style="left:866px;width:80px;top:716px;text-align:center">1</div>
<svg style="left:957px;top:714px" width="19" height="18"><use href="#imat"/></svg>
<svg style="left:994px;top:714px" width="24" height="16"><use href="#ilas"/></svg>
<svg style="left:1031px;top:709px" width="24" height="25"><use href="#ibenw"/></svg>
<div class="t" style="left:1065px;width:59px;top:716px;text-align:center">£54.74</div>
<div class="a" style="left:1136px;top:714px;width:1px;height:16px;background:#c6efc6"></div>
<div class="t" style="left:1125px;width:56px;top:716px;text-align:center">£54.74</div>
<div class="t" style="left:1181px;width:70px;top:716px;text-align:right">13min 0s</div>
<div class="a" style="left:1258px;top:714px;width:2px;height:16px;background:#b2e8f8"></div>
<div class="t" style="left:1254px;width:70px;top:716px;text-align:right;font-style:italic">13min 0s</div>
<div class="t pm" style="left:1326px;width:24px;top:713px">+</div>

<!-- ROW 5 -->
<svg style="left:70px;top:765px" width="58" height="17" viewBox="0 0 58 17">
<rect x="1" y="1" width="56" height="20" fill="#fff" stroke="#333" stroke-width="0.8"/>
<path d="M1 6H57" stroke="#1b1b8a" stroke-width="1.5"/>
<g stroke="#222" stroke-width="1.2" stroke-dasharray="2 1"><path d="M4 9H55M4 12H55M4 15H55"/></g>
</svg>
<div class="bar" style="top:765px;height:17px">TCTool Hang Panel</div>
<svg style="left:1041px;top:779px" width="6" height="3"><rect width="6" height="3" fill="#55acfa"/></svg>

</body></html>
